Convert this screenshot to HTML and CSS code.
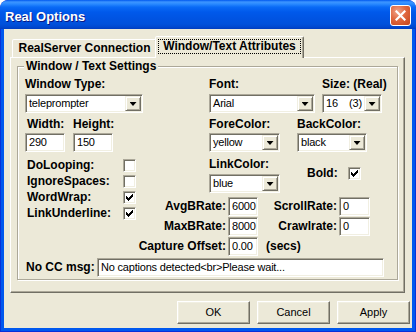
FILE: index.html
```html
<!DOCTYPE html>
<html>
<head>
<meta charset="utf-8">
<title>Real Options</title>
<link rel="stylesheet" href="styles.css">
</head>
<body>
<div class="window">
  <div class="titlebar">
    <span class="title">Real Options</span>
    <span class="close"><svg width="11" height="11" viewBox="0 0 11 11"><path d="M1.5 1.5L9.5 9.5M9.5 1.5L1.5 9.5" stroke="#fff" stroke-width="2.2" stroke-linecap="square"/></svg></span>
  </div>
  <div class="frame">
    <div class="tabs">
      <div class="tab">RealServer Connection</div>
      <div class="tab active"><span class="focus">Window/Text Attributes</span></div>
    </div>
    <div class="panel">
      <div class="group">
        <div class="legend">Window / Text Settings</div>
        <div class="main">
          <div class="leftcol">
            <div class="lbl">Window Type:</div>
            <div class="combo w118 mt3"><span class="val">teleprompter</span><span class="drop"></span></div>
            <div class="row mt5">
              <div class="lbl w48 pl2">Width:</div>
              <div class="lbl">Height:</div>
            </div>
            <div class="row mt2 gap8">
              <div class="edit w40">290</div>
              <div class="edit w40">150</div>
            </div>
            <div class="checks">
              <div class="chkrow"><span class="clbl">DoLooping:</span><span class="chk"></span></div>
              <div class="chkrow"><span class="clbl">IgnoreSpaces:</span><span class="chk"></span></div>
              <div class="chkrow"><span class="clbl">WordWrap:</span><span class="chk"><svg width="7" height="7" viewBox="0 0 7 7" shape-rendering="crispEdges"><path d="M0 2h1v3H0zM1 3h1v3H1zM2 4h1v3H2zM3 3h1v3H3zM4 2h1v3H4zM5 1h1v3H5zM6 0h1v3H6z"/></svg></span></div>
              <div class="chkrow"><span class="clbl">LinkUnderline:</span><span class="chk"><svg width="7" height="7" viewBox="0 0 7 7" shape-rendering="crispEdges"><path d="M0 2h1v3H0zM1 3h1v3H1zM2 4h1v3H2zM3 3h1v3H3zM4 2h1v3H4zM5 1h1v3H5zM6 0h1v3H6z"/></svg></span></div>
            </div>
          </div>
          <div class="rightcol">
            <div class="upper">
              <div class="row">
                <div class="lbl w113">Font:</div>
                <div class="lbl">Size: (Real)</div>
              </div>
              <div class="row mt3">
                <div class="combo w106 mr7"><span class="val">Arial</span><span class="drop"></span></div>
                <div class="combo w60"><span class="val"><span class="sz">16</span>(3)</span><span class="drop"></span></div>
              </div>
              <div class="row mt5">
                <div class="lbl w88">ForeColor:</div>
                <div class="lbl">BackColor:</div>
              </div>
              <div class="row mt2">
                <div class="combo w71 mr17"><span class="val">yellow</span><span class="drop"></span></div>
                <div class="combo w70"><span class="val">black</span><span class="drop"></span></div>
              </div>
              <div class="row mt6">
                <div class="linkcol">
                  <div class="lbl">LinkColor:</div>
                  <div class="combo w71 mt3"><span class="val">blue</span><span class="drop"></span></div>
                </div>
                <div class="boldbox">
                  <span class="lbl w41">Bold:</span>
                  <span class="chk"><svg width="7" height="7" viewBox="0 0 7 7" shape-rendering="crispEdges"><path d="M0 2h1v3H0zM1 3h1v3H1zM2 4h1v3H2zM3 3h1v3H3zM4 2h1v3H4zM5 1h1v3H5zM6 0h1v3H6z"/></svg></span>
                </div>
              </div>
            </div>
            <div class="rates">
              <div class="lbl r">AvgBRate:</div>
              <div class="edit">6000</div>
              <div class="lbl r">ScrollRate:</div>
              <div class="edit">0</div>
              <div class="lbl r">MaxBRate:</div>
              <div class="edit">8000</div>
              <div class="lbl r">Crawlrate:</div>
              <div class="edit">0</div>
              <div class="lbl r">Capture Offset:</div>
              <div class="edit">0.00</div>
              <div class="lbl secs">(secs)</div>
            </div>
          </div>
        </div>
        <div class="ccrow">
          <div class="lbl cclbl">No CC msg:</div>
          <div class="edit w287">No captions detected&lt;br&gt;Please wait...</div>
        </div>
      </div>
    </div>
    <div class="buttons">
      <div class="btn">OK</div>
      <div class="btn">Cancel</div>
      <div class="btn">Apply</div>
    </div>
  </div>
</div>
</body>
</html>
```

FILE: styles.css
```css
* { box-sizing: border-box; }
html, body { margin: 0; padding: 0; }
body {
  width: 416px;
  height: 332px;
  overflow: hidden;
  background: #ffffff;
  font-family: "Liberation Sans", Arial, sans-serif;
  color: #000;
}
.window {
  width: 416px;
  height: 332px;
  display: flex;
  flex-direction: column;
  background: #0831D9;
  padding: 0 1px 1px;
  border-radius: 8px 8px 0 0;
  overflow: hidden;
}
.titlebar {
  height: 29px;
  flex: none;
  display: flex;
  align-items: flex-start;
  justify-content: space-between;
  padding: 5px 5px 0 5px;
  margin: 0 -1px;
  border-radius: 8px 8px 0 0;
  background: linear-gradient(to bottom, #0058EE 0px, #3D95FF 2px, #2A8AFF 4px, #0A6BF6 7px, #0059EB 12px, #0054E3 18px, #0051DB 24px, #0048D0 27px, #003DBE 29px);
}
.title {
  margin-top: 4px;
  font: bold 13px/15px "Liberation Sans", Arial, sans-serif;
  color: #fff;
  text-shadow: 1px 1px #0A1883;
}
.close {
  width: 21px;
  height: 21px;
  border: 1px solid #fff;
  border-radius: 3px;
  display: flex;
  align-items: center;
  justify-content: center;
  background: radial-gradient(circle at 35% 30%, #F0A38A 0%, #E0683F 45%, #C5441A 100%);
}
.frame {
  flex: 1;
  background: #ECE9D8;
  border: 3px solid #0058EE;
  border-top: 0;
}
.tabs {
  display: flex;
  align-items: flex-end;
  height: 21px;
  margin: 7px 0 0 8px;
}
.tab {
  width: 145px;
  height: 18px;
  border: 1px solid;
  border-bottom: 0;
  border-color: #fff #716F64 transparent #fff;
  border-radius: 2px 2px 0 0;
  box-shadow: inset -1px 0 #ACA899;
  background: #ECE9D8;
  padding-top: 2px;
  text-align: center;
  font: bold 12px/13px "Liberation Sans", Arial, sans-serif;
  white-space: nowrap;
}
.tab.active {
  width: 149px;
  height: 22px;
  margin-left: -2px;
  margin-bottom: -1px;
  padding: 0;
  position: relative;
  z-index: 2;
}
.focus {
  display: block;
  height: 15px;
  margin: 2px 2px 0;
  border: 1px dotted #000;
}
.panel {
  width: 395px;
  height: 236px;
  margin-left: 6px;
  border: 1px solid;
  border-color: #fff #716F64 #716F64 #fff;
  box-shadow: inset -1px -1px #ACA899;
  padding: 8px 0 0 6px;
}
.group {
  width: 381px;
  border: 1px solid #ACA899;
  box-shadow: inset 1px 1px #fff, 1px 1px #fff;
  padding: 0 0 2px 7px;
  display: flex;
  flex-direction: column;
}
.legend {
  align-self: flex-start;
  margin: -7px 0 0 -1px;
  padding: 0 2px;
  background: #ECE9D8;
  font: bold 12px/13px "Liberation Sans", Arial, sans-serif;
}
.lbl {
  font: bold 12px/13px "Liberation Sans", Arial, sans-serif;
  white-space: nowrap;
}
.main {
  display: flex;
  margin-top: 5px;
}
.leftcol { width: 116px; flex: none; }
.rightcol { flex: none; }
.upper { padding-left: 68px; }
.row { display: flex; }
.mt2 { margin-top: 2px; }
.mt3 { margin-top: 3px; }
.mt5 { margin-top: 5px; }
.mt6 { margin-top: 6px; }
.mr7 { margin-right: 7px; }
.mr17 { margin-right: 17px; }
.gap8 { gap: 8px; }
.pl2 { padding-left: 2px; }
.w40 { width: 40px; }
.w41 { width: 41px; }
.w48 { width: 48px; }
.w60 { width: 60px; }
.w70 { width: 70px; }
.w71 { width: 71px; }
.w88 { width: 88px; }
.w106 { width: 106px; }
.w113 { width: 113px; }
.w118 { width: 118px; }
.w287 { width: 287px; }

.combo, .edit, .chk {
  background: #fff;
  border: 1px solid;
  border-color: #ACA899 #fff #fff #ACA899;
  box-shadow: inset 1px 1px #716F64, inset -1px -1px #F1EFE2;
}
.combo {
  height: 19px;
  flex: none;
  display: flex;
  align-items: center;
  padding: 1px;
}
.val {
  flex: 1;
  min-width: 0;
  padding-left: 2px;
  font: 11px/13px "Liberation Sans", Arial, sans-serif;
  letter-spacing: -0.2px;
  white-space: nowrap;
  overflow: hidden;
}
.sz { display: inline-block; width: 23px; }
.drop {
  width: 16px;
  height: 15px;
  flex: none;
  background: #ECE9D8;
  border: 1px solid;
  border-color: #F1EFE2 #716F64 #716F64 #F1EFE2;
  box-shadow: inset 1px 1px #fff, inset -1px -1px #ACA899;
  display: flex;
  align-items: center;
  justify-content: center;
}
.drop::after {
  content: "";
  width: 7px;
  height: 4px;
  margin-top: 1px;
  background: #000;
  clip-path: polygon(0 0, 100% 0, 50% 100%);
}
.edit {
  height: 19px;
  flex: none;
  display: flex;
  align-items: center;
  padding-left: 3px;
  font: 11px/13px "Liberation Sans", Arial, sans-serif;
  letter-spacing: -0.2px;
  white-space: nowrap;
}
.checks { margin-top: 5px; }
.chkrow {
  display: flex;
  align-items: center;
  height: 16px;
}
.clbl {
  width: 98px;
  padding-left: 2px;
  font: bold 12px/16px "Liberation Sans", Arial, sans-serif;
  white-space: nowrap;
}
.chk {
  width: 13px;
  height: 13px;
  flex: none;
  display: flex;
  align-items: center;
  justify-content: center;
}
.linkcol { width: 98px; }
.boldbox {
  display: flex;
  align-items: flex-start;
  margin-top: 9px;
}
.rates {
  margin: 4px 0 0 -6px;
  display: grid;
  grid-template-columns: 91px 30px 77px 31px;
  grid-auto-rows: 19px;
  column-gap: 2px;
  row-gap: 1px;
  align-items: center;
}
.r { justify-self: end; }
.secs { justify-self: start; margin-left: 6px; }
.ccrow {
  display: flex;
  align-items: center;
  margin-top: 2px;
}
.cclbl { width: 72px; padding-left: 1px; }
.buttons {
  display: flex;
  justify-content: flex-end;
  gap: 7px;
  margin-top: 8px;
  padding-right: 2px;
}
.btn {
  width: 73px;
  height: 23px;
  border: 1px solid;
  border-color: #fff #716F64 #716F64 #fff;
  box-shadow: inset -1px -1px #ACA899, inset 1px 1px #F1EFE2;
  display: flex;
  align-items: center;
  justify-content: center;
  font: 11px/13px "Liberation Sans", Arial, sans-serif;
}
```
